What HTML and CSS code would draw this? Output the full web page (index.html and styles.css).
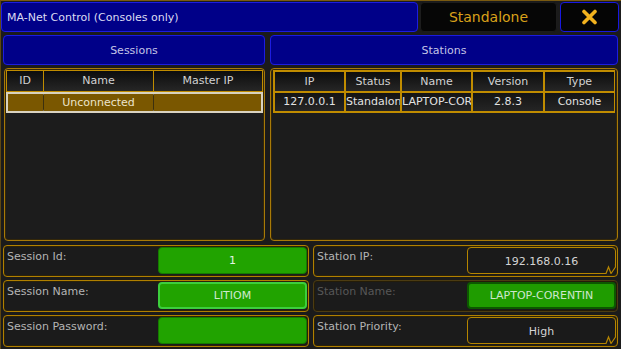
FILE: index.html
```html
<!DOCTYPE html>
<html>
<head>
<meta charset="utf-8">
<link rel="stylesheet" href="styles.css">
</head>
<body>
<div class="app">
  <div class="topbar">
    <div class="title">MA-Net Control (Consoles only)</div>
    <div class="mode">Standalone</div>
    <div class="close">
      <svg width="17" height="16" viewBox="0 0 17 16"><path d="M3 2.5 L14 13.5 M14 2.5 L3 13.5" stroke="#f2b21e" stroke-width="3.6" stroke-linecap="round" fill="none"/></svg>
    </div>
  </div>
  <div class="tabs">
    <div class="tab tab-sessions">Sessions</div>
    <div class="tab tab-stations">Stations</div>
  </div>
  <div class="panels">
    <div class="panel panel-sessions">
      <div class="s-head">
        <div class="th">ID</div>
        <div class="th">Name</div>
        <div class="th">Master IP</div>
      </div>
      <div class="s-row">
        <div class="sc"></div>
        <div class="sc">Unconnected</div>
        <div class="sc"></div>
      </div>
    </div>
    <div class="panel panel-stations">
      <div class="st-grid">
        <div class="th">IP</div>
        <div class="th">Status</div>
        <div class="th">Name</div>
        <div class="th">Version</div>
        <div class="th">Type</div>
        <div class="td">127.0.0.1</div>
        <div class="td">Standalone</div>
        <div class="td">LAPTOP-CORENTIN</div>
        <div class="td">2.8.3</div>
        <div class="td">Console</div>
      </div>
    </div>
  </div>
  <div class="form">
    <div class="fcell"><span class="label">Session Id:</span><div class="field green">1</div></div>
    <div class="fcell"><span class="label">Station IP:</span><div class="field outline">192.168.0.16<svg class="notch" width="11" height="10" viewBox="0 0 11 10"><rect x="0" y="0" width="11" height="10" fill="#1a1a1a"/><path d="M0 9.5 H1 L3.5 3 L6 9.5 L10.5 3 V0" stroke="#b58500" stroke-width="1.2" fill="none"/></svg></div></div>
    <div class="fcell"><span class="label">Session Name:</span><div class="field green active">LITIOM</div></div>
    <div class="fcell dim"><span class="label">Station Name:</span><div class="field green dark">LAPTOP-CORENTIN</div></div>
    <div class="fcell"><span class="label">Session Password:</span><div class="field green"></div></div>
    <div class="fcell"><span class="label">Station Priority:</span><div class="field outline">High<svg class="notch" width="11" height="10" viewBox="0 0 11 10"><rect x="0" y="0" width="11" height="10" fill="#1a1a1a"/><path d="M0 9.5 H1 L3.5 3 L6 9.5 L10.5 3 V0" stroke="#b58500" stroke-width="1.2" fill="none"/></svg></div></div>
  </div>
</div>
</body>
</html>
```

FILE: styles.css
```css
html, body {
  margin: 0;
  padding: 0;
  background: #1b1b1b;
}

body {
  font-family: "DejaVu Sans", sans-serif;
  font-size: 11px;
}

.app {
  width: 621px;
  height: 349px;
  box-sizing: border-box;
  border-top: 1px solid #7a5a10;
  border-left: 1px solid #5e4710;
  overflow: hidden;
}

.topbar {
  display: flex;
  height: 30px;
  margin-top: 1px;
}

.title {
  width: 417px;
  box-sizing: border-box;
  background: #000088;
  border: 1px solid #1c1ce0;
  border-radius: 4px;
  color: #dcdcf2;
  padding-left: 5px;
  display: flex;
  align-items: center;
}

.mode {
  width: 137px;
  margin-left: 2px;
  box-sizing: border-box;
  background: #060606;
  border: 1px solid #1c1c1c;
  border-radius: 4px;
  color: #d9a11a;
  font-size: 14px;
  display: flex;
  align-items: center;
  justify-content: center;
}

.close {
  width: 59px;
  margin-left: 3px;
  box-sizing: border-box;
  background: #050505;
  border: 1px solid #1818e0;
  border-radius: 4px;
  display: flex;
  align-items: center;
  justify-content: center;
}

.tabs {
  display: flex;
  height: 30px;
  margin-top: 3px;
  padding-left: 2px;
  gap: 5px;
}

.tab {
  box-sizing: border-box;
  background: #000088;
  border: 1px solid #1c1ce0;
  border-radius: 4px;
  color: #c4c4e6;
  display: flex;
  align-items: center;
  justify-content: center;
}

.tab-sessions { width: 262px; }
.tab-stations { width: 348px; }

.panels {
  display: flex;
  height: 173px;
  margin-top: 3px;
  padding-left: 3px;
  gap: 5px;
}

.panel {
  box-sizing: border-box;
  border: 1px solid #a87a08;
  border-radius: 4px;
  box-shadow: inset 0 0 0 1px #33270a;
  background: #1c1c1c;
}

.panel-sessions {
  width: 261px;
  padding: 1px;
}

.panel-stations {
  width: 348px;
  padding: 1px 2px;
}

.th {
  background: linear-gradient(#0d0d0d, #262626);
  color: #d2d2d2;
  text-align: center;
  white-space: nowrap;
  overflow: hidden;
}

.s-head {
  display: grid;
  grid-template-columns: 36px 109px 108px;
  grid-template-rows: 20px;
  gap: 1px;
  padding: 1px;
  background: #c08c00;
}

.s-head .th {
  line-height: 20px;
}

.s-row {
  display: grid;
  grid-template-columns: 35px 109px 107px;
  grid-template-rows: 17px;
  gap: 1px;
  border: 2px solid #d8d2c0;
  background: #3c300e;
  box-shadow: inset 0 0 2px #fff;
}

.sc {
  background: #7a5700;
  color: #ece4cc;
  text-align: center;
  line-height: 17px;
}

.st-grid {
  display: grid;
  grid-template-columns: 69px 54px 69px 70px 69px;
  grid-template-rows: 19px 18px;
  gap: 2px;
  padding: 2px;
  background: #c08c00;
}

.st-grid .th {
  line-height: 19px;
}

.td {
  background: linear-gradient(#141414, #252525);
  color: #e2e2e2;
  text-align: center;
  line-height: 18px;
  white-space: nowrap;
  overflow: hidden;
}

.form {
  display: grid;
  grid-template-columns: 306px 305px;
  grid-auto-rows: 32px;
  column-gap: 4px;
  row-gap: 3px;
  margin-top: 4px;
  padding-left: 2px;
}

.fcell {
  box-sizing: border-box;
  display: flex;
  justify-content: space-between;
  align-items: flex-start;
  border: 1px solid #b08000;
  border-radius: 4px;
  box-shadow: inset 0 0 0 1px #2c2208;
  padding: 0 1px 0 3px;
}

.label {
  padding-top: 4px;
  color: #b4b4b4;
  white-space: nowrap;
}

.field {
  position: relative;
  width: 149px;
  height: 27px;
  margin-top: 1px;
  box-sizing: border-box;
  border-radius: 4px;
  display: flex;
  align-items: center;
  justify-content: center;
  white-space: nowrap;
}

.green {
  background: #21a300;
  border: 1px solid #157a00;
  color: #e4f4e4;
}

.green.active {
  border: 2px solid #3ccf3c;
  color: #cfe9cf;
}

.green.dark {
  background: #1f9c00;
  border: 2px solid #0c5800;
  color: #cde6cd;
}

.outline {
  background: #1a1a1a;
  border: 1px solid #b58500;
  color: #d4d4d4;
  padding-top: 2px;
}

.notch {
  position: absolute;
  right: -1px;
  bottom: -1px;
}

.fcell.dim {
  border-color: #4c3c12;
  box-shadow: inset 0 0 0 1px #241c08;
}

.fcell.dim .label {
  color: #575757;
}
```
